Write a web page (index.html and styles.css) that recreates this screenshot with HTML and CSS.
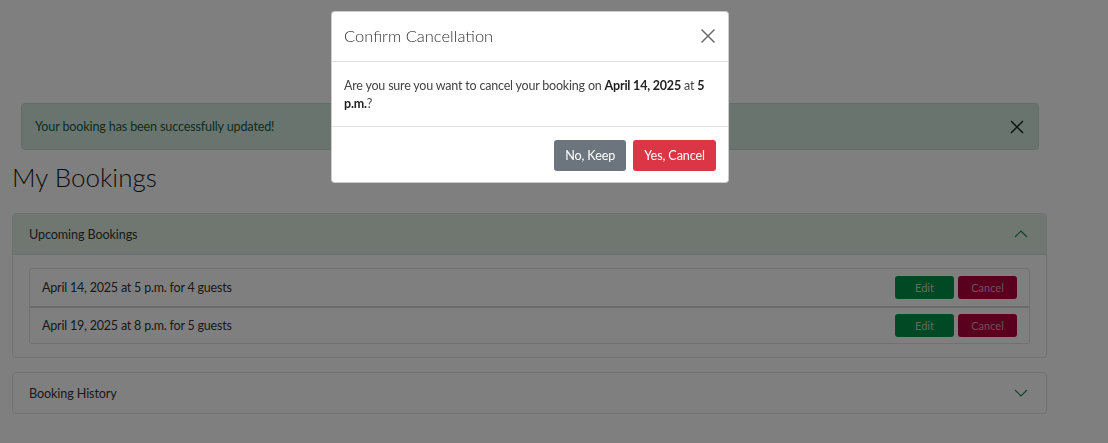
FILE: index.html
```html
<!DOCTYPE html>
<html>
<head>
<meta charset="utf-8">
<link rel="stylesheet" href="styles.css">
</head>
<body>
<main class="page">
  <div class="alert">
    <span>Your booking has been successfully updated!</span>
    <svg class="alert-close" width="16" height="16" viewBox="0 0 16 16"><path d="M2 2L14 14M14 2L2 14" stroke="#0f2a1c" stroke-width="1.5" fill="none"/></svg>
  </div>
  <h1 class="title">My Bookings</h1>
  <section class="acc acc-open">
    <div class="acc-head acc-head-open">
      <span>Upcoming Bookings</span>
      <svg width="14" height="8" viewBox="0 0 14 8"><path d="M1 7L7 1L13 7" stroke="#1a8a4a" stroke-width="1.2" fill="none"/></svg>
    </div>
    <div class="acc-body">
      <div class="list">
        <div class="row">
          <span>April 14, 2025 at 5 p.m. for 4 guests</span>
          <div class="btns"><span class="btn btn-edit">Edit</span><span class="btn btn-cancel">Cancel</span></div>
        </div>
        <div class="row">
          <span>April 19, 2025 at 8 p.m. for 5 guests</span>
          <div class="btns"><span class="btn btn-edit">Edit</span><span class="btn btn-cancel">Cancel</span></div>
        </div>
      </div>
    </div>
  </section>
  <section class="acc acc-closed">
    <div class="acc-head">
      <span>Booking History</span>
      <svg width="14" height="8" viewBox="0 0 14 8"><path d="M1 1L7 7L13 1" stroke="#1a8a4a" stroke-width="1.2" fill="none"/></svg>
    </div>
  </section>
</main>
<div class="backdrop"></div>
<div class="modal">
  <div class="modal-head">
    <h2 class="modal-title">Confirm Cancellation</h2>
    <svg class="modal-close" width="16" height="16" viewBox="0 0 16 16"><path d="M1.5 1.5L14.5 14.5M14.5 1.5L1.5 14.5" stroke="#6c6c6c" stroke-width="1.5" fill="none"/></svg>
  </div>
  <div class="modal-body">
    Are you sure you want to cancel your booking on <strong>April 14, 2025</strong> at <strong>5 p.m.</strong>?
  </div>
  <div class="modal-foot">
    <span class="mbtn mbtn-gray">No, Keep</span>
    <span class="mbtn mbtn-red">Yes, Cancel</span>
  </div>
</div>
</body>
</html>
```
FILE: styles.css
```css
* { box-sizing: border-box; }
html, body { margin: 0; padding: 0; }
body {
  background: #fff;
  font-family: Lato, "Noto Sans", sans-serif;
  font-weight: 400;
  color: #212529;
  width: 1108px;
  height: 443px;
  overflow: hidden;
}
.page {
  padding: 103px 61px 0 12px;
}
.alert {
  margin: 0 8px 0 9px;
  height: 47px;
  background: #d3e8dc;
  border: 1px solid #c4dfcf;
  border-radius: 4px;
  color: #1d5a3c;
  font-size: 12.6px;
  letter-spacing: -0.15px;
  display: flex;
  align-items: center;
  justify-content: space-between;
  padding: 0 13px 0 13px;
}
.title {
  margin: 11px 0 0 0;
  font-size: 26px;
  font-weight: 300;
  line-height: 32px;
  height: 52px;
  color: #1a1a1a;
}
.acc {
  border: 1px solid #dee2e6;
  border-radius: 4px;
  background: #fff;
}
.acc-closed { margin-top: 14px; }
.acc-head {
  height: 40px;
  display: flex;
  align-items: center;
  justify-content: space-between;
  padding: 0 18px 0 16px;
  font-size: 12.6px;
  letter-spacing: -0.1px;
  color: #333;
}
.acc-head-open {
  height: 41px;
  background: #e0eee3;
  border-bottom: 1px solid #d6dcd8;
}
.acc-body {
  padding: 13px 16px 13px 16px;
}
.list {
  border: 1px solid #dee2e6;
  border-radius: 3px;
}
.row {
  height: 37px;
  display: flex;
  align-items: center;
  justify-content: space-between;
  padding: 0 12px 0 12px;
  font-size: 12.5px;
  letter-spacing: -0.2px;
  color: #333;
}
.row + .row { border-top: 2px solid #d6d6d6; }
.btns { display: flex; gap: 4px; letter-spacing: 0; }
.btn {
  width: 59px;
  height: 23px;
  border-radius: 3px;
  display: flex;
  align-items: center;
  justify-content: center;
  font-size: 11px;
}
.btn-edit { background: #039048; color: #b8dcc4; }
.btn-cancel { background: #b4003e; color: #d8a0b4; }
.backdrop {
  position: fixed;
  inset: 0;
  background: rgba(0,0,0,0.5);
}
.modal {
  position: absolute;
  left: 331px;
  top: 11px;
  width: 398px;
  background: #fff;
  border: 1px solid rgba(0,0,0,0.2);
  border-radius: 4px;
}
.modal-head {
  height: 50px;
  display: flex;
  align-items: center;
  justify-content: space-between;
  padding: 0 12px 2px 12px;
  border-bottom: 1px solid #dee2e6;
}
.modal-title {
  margin: 0;
  font-size: 16.5px;
  font-weight: 300;
  color: #333;
}
.modal-body {
  padding: 15px 12px 13px 12px;
  font-size: 12.5px;
  letter-spacing: -0.2px;
  line-height: 18px;
  color: #444;
  border-bottom: 1px solid #dee2e6;
}
.modal-body strong { color: #222; font-weight: 700; }
.modal-foot {
  display: flex;
  justify-content: flex-end;
  gap: 7px;
  padding: 13px 12px 11px 12px;
}
.mbtn {
  height: 31px;
  display: flex;
  align-items: center;
  padding: 0 11px;
  border-radius: 3px;
  color: #fff;
  font-size: 12.6px;
  letter-spacing: -0.1px;
}
.mbtn-gray { background: #6c757d; }
.mbtn-red { background: #dc3545; }
```
